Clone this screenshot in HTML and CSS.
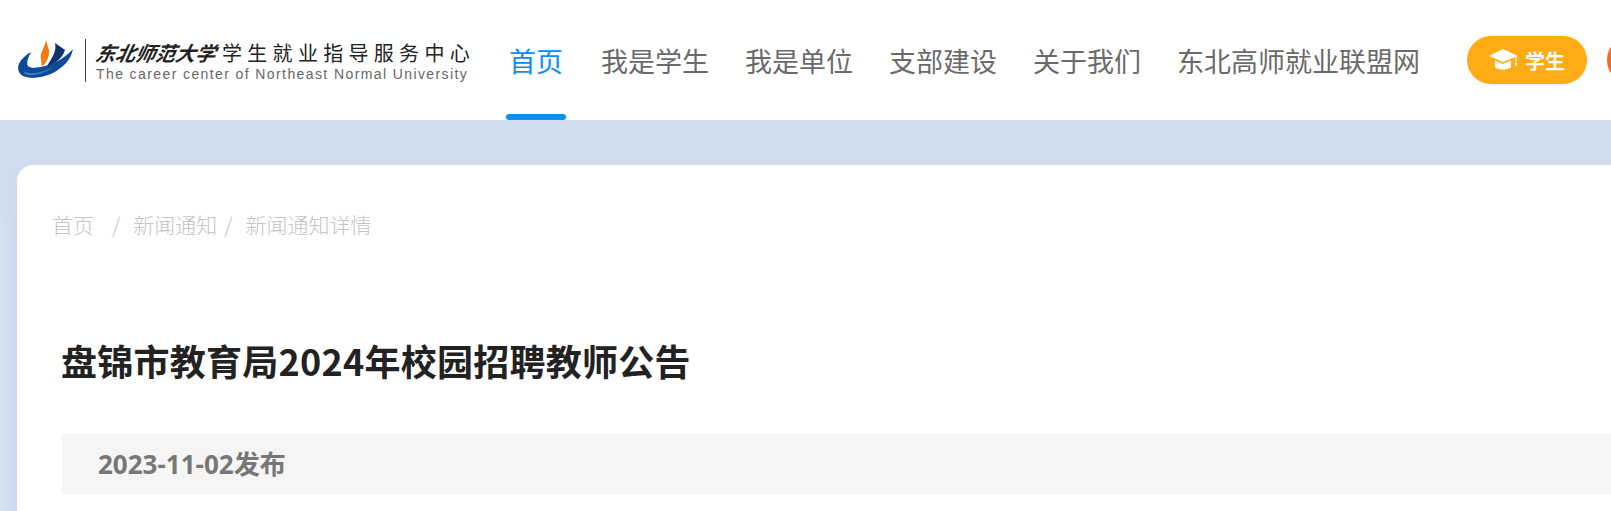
FILE: index.html
```html
<!DOCTYPE html>
<html lang="zh-CN">
<head>
    <meta charset="UTF-8">
    <title>盘锦市教育局2024年校园招聘教师公告</title>
    <link rel="stylesheet" href="styles.css">
</head>
<body>
    <header class="header">
        <a class="logo">
            <svg class="logo-mark" width="58" height="44" viewBox="0 0 58 44">
                <path d="M14 14C4 20 -1 27 2 34C6 42 22 41 34 36C46 30 54 22 56 11C50 18 41 24 31 27C22 30 14 31 11 28C9 25 11 20 14 14Z" fill="#0f4a98"/>
                <path d="M6 33C12 37 26 35 36 29C28 36 14 39 8 36Z" fill="#2f7fcc"/>
                <path d="M38 5L48 12C46 19 40 25 30 28C35 20 40 13 38 5Z" fill="#10306f"/>
                <path d="M29 2C30 8 33 11 32 16C31 22 28 26 25 29C25 25 23 21 24 16C25 12 28 8 29 2Z" fill="#f27a12"/>
            </svg>
            <span class="logo-rule"></span>
            <span class="logo-text">
                <span class="logo-title"><em>东北师范大学</em><span>学生就业指导服务中心</span></span>
                <span class="logo-sub">The career center of Northeast Normal University</span>
            </span>
        </a>
        <nav class="nav">
            <a class="nav-item active">首页</a>
            <a class="nav-item">我是学生</a>
            <a class="nav-item">我是单位</a>
            <a class="nav-item">支部建设</a>
            <a class="nav-item">关于我们</a>
            <a class="nav-item">东北高师就业联盟网</a>
        </nav>
        <a class="role-btn">
            <svg width="30" height="22" viewBox="0 0 30 22">
                <path d="M14 0L29 7L14 13L0 7Z" fill="#fff"/>
                <path d="M6 11.500L14 15L22 11.500V18C19 21.500 9 21.500 6 18Z" fill="#fff"/>
                <path d="M27 8V14" stroke="#fff" stroke-width="1"/>
                <path d="M25.500 14H28.500L27 18Z" fill="#fff"/>
            </svg>
            学生
        </a>
        <span class="role-dot"></span>
    </header>
    <main class="page">
        <section class="card">
            <div class="crumbs">
                <a class="crumb-home">首页</a>
                <span class="crumb-sep">/</span>
                <a>新闻通知</a>
                <span class="crumb-sep">/</span>
                <a>新闻通知详情</a>
            </div>
            <h1 class="title">盘锦市教育局2024年校园招聘教师公告</h1>
            <div class="meta">2023-11-02发布</div>
        </section>
    </main>
</body>
</html>
```

FILE: styles.css
```css
html, body {
    height: 100%;
}

body {
    margin: 0;
    overflow: hidden;
    font-family: "Open Sans", "Noto Sans CJK SC", sans-serif;
    background: #d0ddee;
}

.header {
    display: flex;
    align-items: flex-start;
    width: 1611px;
    height: 120px;
    overflow: hidden;
    background: #fff;
}

.logo {
    display: flex;
    flex: none;
    align-items: center;
    width: 505px;
    height: 64px;
    margin-top: 28px;
    padding-left: 17px;
    box-sizing: border-box;
}

.logo-mark {
    flex: none;
}

.logo-rule {
    width: 1px;
    height: 43px;
    margin: 0 10px;
    background: #444;
}

.logo-text {
    display: flex;
    flex-direction: column;
    color: #222;
}

.logo-title {
    display: flex;
    align-items: center;
    height: 27px;
    font-size: 20px;
    letter-spacing: 5.300px;
    white-space: nowrap;
}

.logo-title em {
    margin-right: 6px;
    font-family: "Noto Sans CJK SC", sans-serif;
    font-size: 20px;
    font-weight: 700;
    letter-spacing: 0;
    transform: skewX(-12deg);
}

.logo-sub {
    font-family: "Liberation Sans", sans-serif;
    font-size: 14px;
    letter-spacing: 1.400px;
    color: #666;
    white-space: nowrap;
}

.nav {
    display: flex;
    flex: none;
    gap: 28px;
    height: 120px;
}

.nav-item {
    position: relative;
    height: 120px;
    padding: 0 4px;
    box-sizing: border-box;
    line-height: 122px;
    font-family: "Noto Sans CJK SC", sans-serif;
    font-size: 27px;
    color: #6a6a6a;
    white-space: nowrap;
}

.nav-item.active {
    margin-right: 2px;
    color: #0a8cff;
}

.nav-item.active::after {
    content: "";
    position: absolute;
    left: 1px;
    right: 1px;
    bottom: 0;
    height: 6px;
    border-radius: 3px;
    background: #0091ff;
}

.role-btn {
    display: flex;
    flex: none;
    align-items: center;
    justify-content: center;
    gap: 6px;
    width: 120px;
    height: 48px;
    margin: 36px 0 0 43px;
    border-radius: 24px;
    background: #ffab13;
    color: #fff;
    font-family: "Noto Sans CJK SC", sans-serif;
    font-size: 20px;
    font-weight: 700;
}

.role-dot {
    flex: none;
    width: 48px;
    height: 48px;
    margin: 36px 0 0 20px;
    border-radius: 50%;
    background: #f5671f;
}

.page {
    height: 391px;
    padding: 45px 0 0 17px;
    box-sizing: border-box;
    background:
        linear-gradient(180deg, #d0ddee 45px, rgba(208, 221, 238, 0) 130px) 0 0 / 17px 100% no-repeat,
        linear-gradient(90deg, #d6e2f0 0, #c9d9ee 17px) 0 0 / 17px 100% no-repeat,
        #d0ddee;
}

.card {
    height: 346px;
    padding: 0 0 0 35px;
    border-radius: 16px 0 0 0;
    background: #fff;
}

.crumbs {
    display: flex;
    padding-top: 44px;
    font-family: "Noto Sans CJK SC", sans-serif;
    font-size: 21px;
    font-weight: 300;
    line-height: 30px;
    color: #c4c4c4;
}

.crumb-home {
    margin-right: 18px;
}

.crumb-sep {
    margin-right: 13px;
}

.crumb-sep + a + .crumb-sep {
    margin-left: 7px;
}

.title {
    margin: 96px 0 0 9px;
    font-family: "Noto Sans CJK SC", sans-serif;
    font-size: 36px;
    letter-spacing: 0.250px;
    line-height: 50px;
    font-weight: 700;
    color: #222;
}

.meta {
    height: 60px;
    margin: 49px 0 0 10px;
    padding-left: 36px;
    background: #f5f5f5;
    font-size: 26px;
    font-weight: 700;
    line-height: 60px;
    color: #777;
}
```
